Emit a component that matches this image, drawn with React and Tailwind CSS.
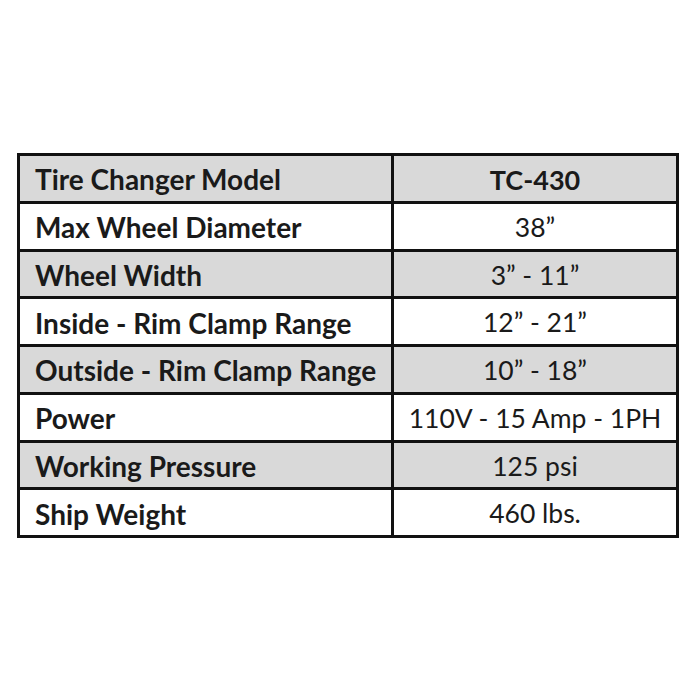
import React from "react";

const rows = [
  ["Tire Changer Model", "TC-430", true],
  ["Max Wheel Diameter", "38\u201D", false],
  ["Wheel Width", "3\u201D - 11\u201D", true],
  ["Inside - Rim Clamp Range", "12\u201D - 21\u201D", false],
  ["Outside - Rim Clamp Range", "10\u201D - 18\u201D", true],
  ["Power", "110V - 15 Amp - 1PH", false],
  ["Working Pressure", "125 psi", true],
  ["Ship Weight", "460 lbs.", false],
];

export default function App() {
  return (
    <div
      className="w-[700px] h-[700px] bg-white pt-[153px] pl-[17px]"
      style={{ fontFamily: "Lato, 'Open Sans', sans-serif" }}
    >
      <div className="w-[662px] h-[385px] bg-[#111] p-[3px] grid grid-cols-[371px_282px] grid-rows-8 gap-[3px] text-[#1a1a1a]">
        {rows.map(([k, v, gray], i) => (
          <React.Fragment key={i}>
            <div className={`${gray ? "bg-[#d9d9d9]" : "bg-white"} flex items-center pl-[15px] pt-[2px] text-[28px] font-bold leading-none whitespace-nowrap`}>
              {k}
            </div>
            <div className={`${gray ? "bg-[#d9d9d9]" : "bg-white"} flex items-center justify-center pt-[2px] leading-none whitespace-nowrap ${i === 0 ? "font-bold text-[27px]" : "text-[26.5px]"}`}>
              {v}
            </div>
          </React.Fragment>
        ))}
      </div>
    </div>
  );
}
